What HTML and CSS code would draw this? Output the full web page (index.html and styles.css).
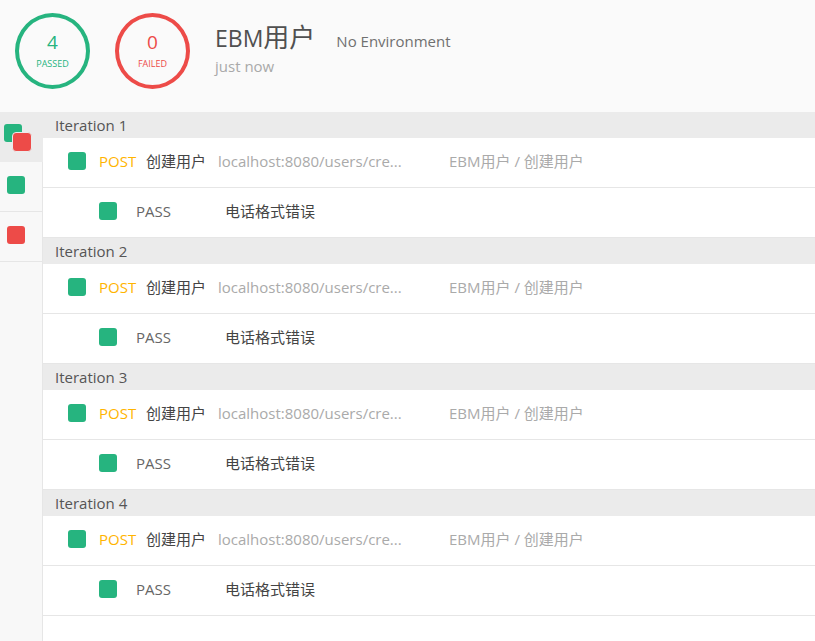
FILE: index.html
```html
<!DOCTYPE html>
<html>
<head>
<meta charset="utf-8">
<link rel="stylesheet" href="styles.css">
</head>
<body>
<div class="header">
  <div class="ring ring-pass"><span class="ring-num">4</span><span class="ring-label">PASSED</span></div>
  <div class="ring ring-fail"><span class="ring-num">0</span><span class="ring-label">FAILED</span></div>
  <div class="meta">
    <div class="meta-top"><span class="title">EBM<span class="title-cjk">用户</span></span><span class="env">No Environment</span></div>
    <div class="when">just now</div>
  </div>
</div>
<div class="main">
  <div class="sidebar">
    <div class="side-item selected"><span class="stack"><span class="sq green back"></span><span class="sq red front"></span></span></div>
    <div class="side-item"><span class="sq green"></span></div>
    <div class="side-item"><span class="sq red"></span></div>
  </div>
  <div class="content">
    <div class="iter">
      <div class="iter-head">Iteration 1</div>
      <div class="req-row"><span class="sq green"></span><span class="method">POST</span><span class="name">创建用户</span><span class="url">localhost:8080/users/cre...</span><span class="path">EBM用户 / 创建用户</span></div>
      <div class="test-row"><span class="sq green"></span><span class="status">PASS</span><span class="msg">电话格式错误</span></div>
    </div>
    <div class="iter">
      <div class="iter-head">Iteration 2</div>
      <div class="req-row"><span class="sq green"></span><span class="method">POST</span><span class="name">创建用户</span><span class="url">localhost:8080/users/cre...</span><span class="path">EBM用户 / 创建用户</span></div>
      <div class="test-row"><span class="sq green"></span><span class="status">PASS</span><span class="msg">电话格式错误</span></div>
    </div>
    <div class="iter">
      <div class="iter-head">Iteration 3</div>
      <div class="req-row"><span class="sq green"></span><span class="method">POST</span><span class="name">创建用户</span><span class="url">localhost:8080/users/cre...</span><span class="path">EBM用户 / 创建用户</span></div>
      <div class="test-row"><span class="sq green"></span><span class="status">PASS</span><span class="msg">电话格式错误</span></div>
    </div>
    <div class="iter">
      <div class="iter-head">Iteration 4</div>
      <div class="req-row"><span class="sq green"></span><span class="method">POST</span><span class="name">创建用户</span><span class="url">localhost:8080/users/cre...</span><span class="path">EBM用户 / 创建用户</span></div>
      <div class="test-row"><span class="sq green"></span><span class="status">PASS</span><span class="msg">电话格式错误</span></div>
    </div>
  </div>
</div>
</body>
</html>
```
FILE: styles.css
```css
* { box-sizing: border-box; }
html, body { margin: 0; padding: 0; height: 100%; }
body {
  font-family: "Open Sans", "Noto Sans CJK SC", sans-serif;
  background: #fff;
  color: #505050;
  overflow: hidden;
}
.header {
  height: 112px;
  background: #fafafa;
  display: flex;
  align-items: flex-start;
  padding: 13px 0 0 15px;
  gap: 25px;
}
.ring {
  width: 75px;
  height: 76px;
  border-radius: 50%;
  border: 4px solid;
  display: flex;
  flex-direction: column;
  align-items: center;
  justify-content: center;
  flex: none;
}
.ring-pass { border-color: #26b47f; color: #26b47f; }
.ring-fail { border-color: #ed4b48; color: #ed4b48; }
.ring-num { font-size: 19px; line-height: 22px; margin-top: -1px; }
.ring-label { font-size: 9px; line-height: 12px; margin-top: 5px; }
.meta { padding-top: 9px; }
.meta-top { display: flex; align-items: baseline; height: 30px; }
.title { font-size: 23px; line-height: 30px; color: #505050; }
.title-cjk { font-size: 26px; }
.env { font-size: 15px; color: #707070; margin-left: 21px; }
.when { font-size: 15px; color: #a9a9a9; line-height: 20px; margin-top: 4px; }

.main { display: flex; height: calc(100% - 112px); }
.sidebar {
  width: 43px;
  flex: none;
  background: #f8f8f8;
  border-right: 1px solid #e6e6e6;
}
.side-item {
  height: 50px;
  border-bottom: 1px solid #e6e6e6;
  display: flex;
  align-items: center;
  padding: 0 0 4px 7px;
}
.side-item.selected {
  background: #ebebeb;
  border-bottom: none;
  margin-right: -1px;
  padding-left: 4px;
  align-items: flex-start;
  padding-top: 12px;
}
.stack { position: relative; width: 28px; height: 28px; display: block; }
.stack .back { position: absolute; left: 0; top: 0; }
.stack .front { position: absolute; left: 8px; top: 8px; width: 20px; height: 20px; border: 1px solid #ebebeb; border-radius: 4px; }
.sq {
  display: inline-block;
  width: 18px;
  height: 18px;
  border-radius: 3px;
  flex: none;
}
.green { background: #26b47f; }
.red { background: #ed4b48; }

.content { flex: 1; min-width: 0; }
.iter-head {
  height: 26px;
  background: #ebebeb;
  font-size: 15px;
  line-height: 26px;
  padding-left: 12px;
  color: #555;
}
.req-row, .test-row {
  height: 50px;
  border-bottom: 1px solid #e6e6e6;
  display: flex;
  align-items: center;
  font-size: 15px;
  white-space: nowrap;
  padding-bottom: 4px;
}
.req-row { padding-left: 25px; }
.test-row { padding-left: 56px; }
.method { color: #ffb400; margin-left: 13px; width: 47px; }
.name { color: #444; width: 72px; }
.url { color: #aaa; width: 231px; }
.path { color: #aaa; }
.status { color: #666; margin-left: 19px; width: 89px; }
.msg { color: #444; }
```
